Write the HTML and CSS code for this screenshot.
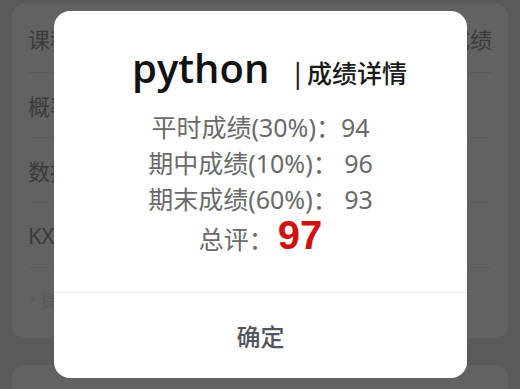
FILE: index.html
```html
<!DOCTYPE html>
<html lang="zh-CN">
<head>
  <meta charset="UTF-8" />
  <meta name="viewport" content="width=device-width, initial-scale=1.0" />
  <title>成绩详情</title>
  <link rel="stylesheet" href="styles.css">
</head>
<body>
  <main class="page">
    <section class="card">
      <div class="row head"><span>课程</span><span>成绩</span></div>
      <div class="row"><span>概率论</span><span></span></div>
      <div class="row"><span>数据结构</span><span></span></div>
      <div class="row"><span>KX</span><span></span></div>
      <div class="row faint"><span>* 提示</span><span></span></div>
    </section>
    <section class="card next"></section>
  </main>

  <div class="mask">
    <div class="dialog">
      <div class="dialog-body">
        <h1 class="title"><span class="course">python</span><span class="sub">| 成绩详情</span></h1>
        <p class="line">平时成绩(30%)：94</p>
        <p class="line">期中成绩(10%)： 96</p>
        <p class="line">期末成绩(60%)： 93</p>
        <p class="line total">总评：<span class="score">97</span></p>
      </div>
      <div class="dialog-foot">确定</div>
    </div>
  </div>
</body>
</html>
```

FILE: styles.css
```css
body {
  margin: 0;
  width: 520px;
  height: 389px;
  overflow: hidden;
  background-color: #5a5a5a;
  font-family: "Noto Sans", "Noto Sans CJK SC", sans-serif;
}

.page {
  padding: 4px 12px 0;
}

.card {
  background-color: #626262;
  border-radius: 12px;
  padding: 0 16px;
  height: 334px;
  box-sizing: border-box;
}

.card.next {
  margin-top: 27px;
  height: 40px;
}

.row {
  display: flex;
  justify-content: space-between;
  align-items: center;
  height: 64px;
  border-bottom: 1px solid #5b5b5b;
  color: #3b3b3b;
  font-size: 22px;
}

.row.head {
  height: 68px;
}

.row.faint {
  color: #585858;
  font-size: 16px;
  border-bottom: none;
}

.mask {
  position: absolute;
  top: 0;
  left: 0;
  right: 0;
  bottom: 0;
}

.dialog {
  position: absolute;
  left: 54px;
  top: 11px;
  width: 413px;
  height: 367px;
  background-color: #fff;
  border-radius: 16px;
  display: flex;
  flex-direction: column;
}

.dialog-body {
  flex: 1;
  padding-top: 32px;
  text-align: center;
  border-bottom: 1px solid #eeeeee;
}

.title {
  margin: 0 0 16px;
  padding-left: 18px;
  height: 50px;
  line-height: 50px;
  font-weight: normal;
  color: #111;
}

.course {
  font-family: "Open Sans", "Noto Sans", sans-serif;
  font-size: 40px;
  font-weight: 600;
}

.sub {
  margin-left: 25px;
  font-family: "Noto Sans CJK SC", sans-serif;
  font-size: 25px;
  font-weight: 500;
  color: #1a1a1a;
}

.line {
  margin: 0;
  height: 36px;
  line-height: 36px;
  font-size: 25px;
  color: #6a6a6a;
}

.score {
  margin-left: 4px;
  font-family: "Liberation Sans", Arial, sans-serif;
  font-size: 40px;
  line-height: 36px;
  font-weight: bold;
  color: #cf1111;
}

.dialog-foot {
  height: 85px;
  line-height: 85px;
  text-align: center;
  font-family: "Noto Sans CJK SC", sans-serif;
  font-size: 24px;
  font-weight: 500;
  color: #51555f;
}
```
